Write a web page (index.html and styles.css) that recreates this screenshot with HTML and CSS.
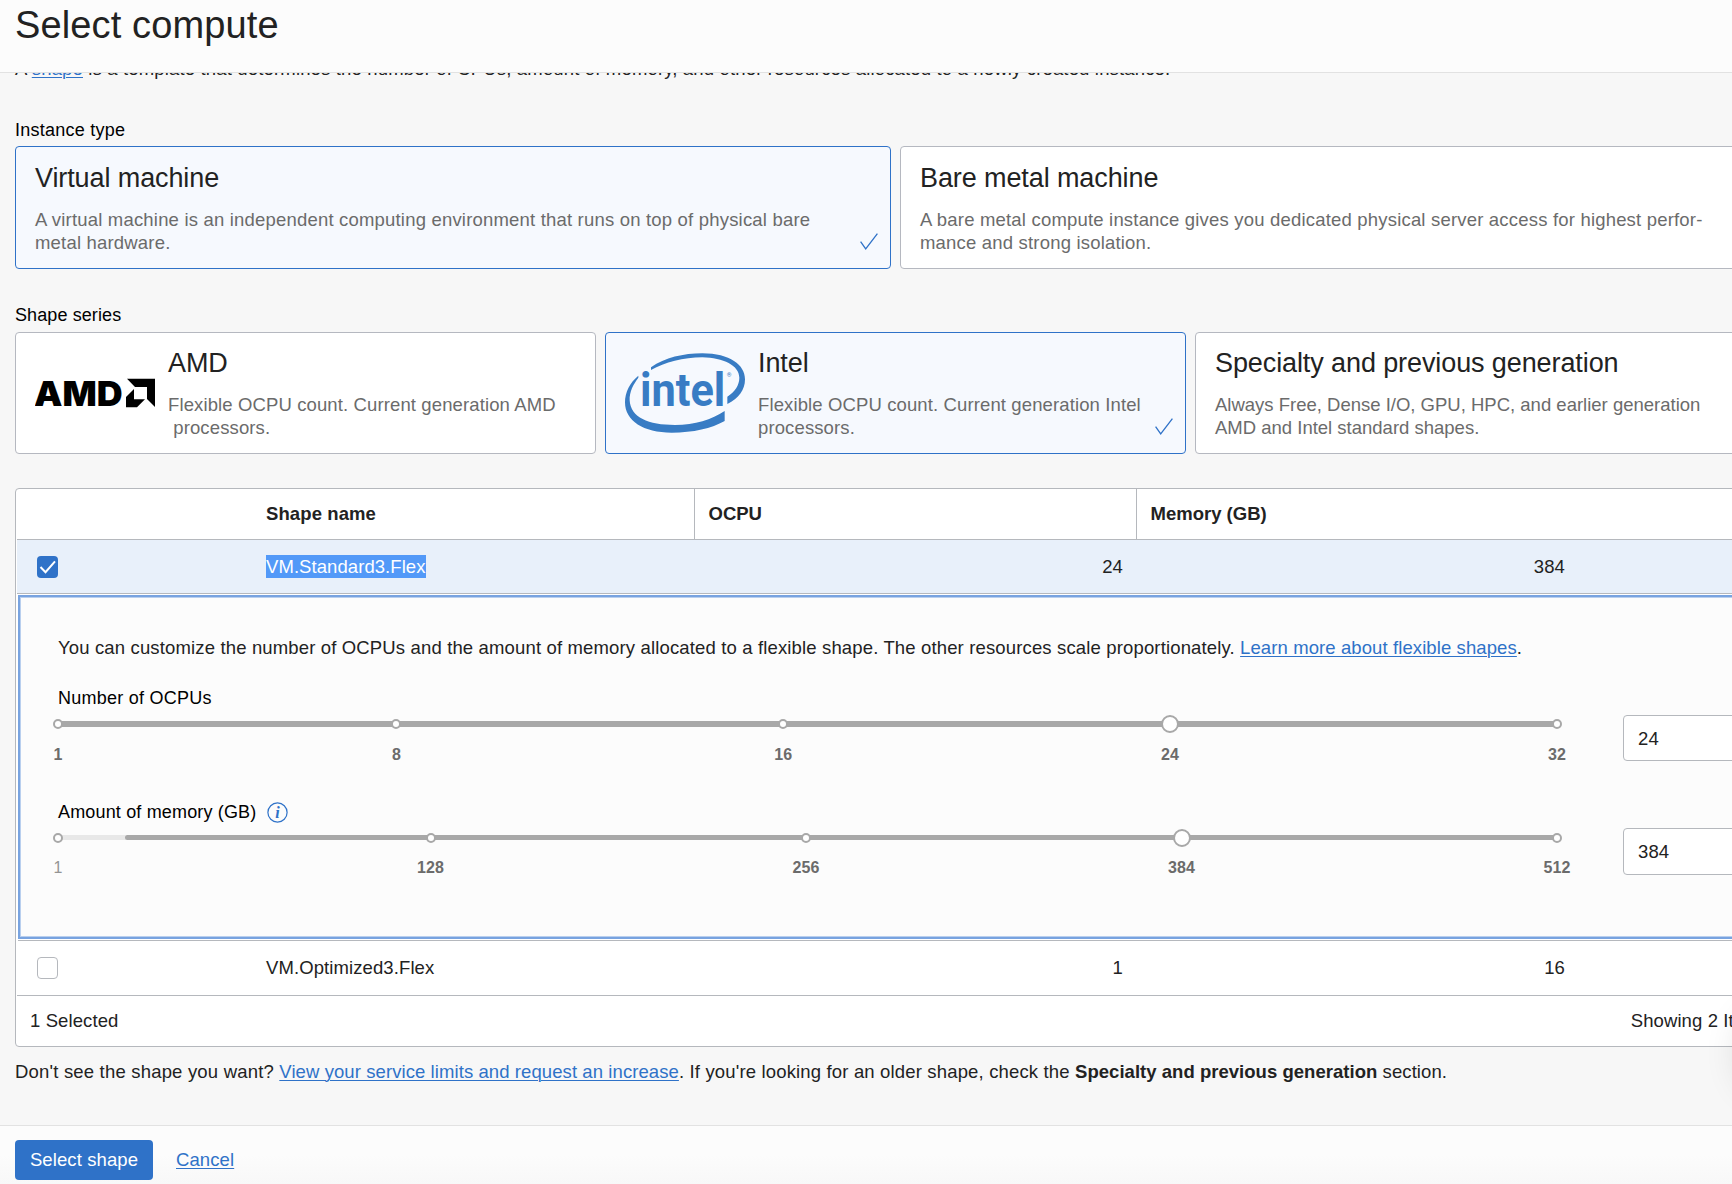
FILE: index.html
```html
<!DOCTYPE html>
<html lang="en">
<head>
<meta charset="utf-8">
<title>Select compute</title>
<link rel="stylesheet" href="styles.css">
</head>
<body>
<div class="page">
  <header class="head"><h1>Select compute</h1></header>
  <main class="body">
    <p class="intro">A <a>shape</a> is a template that determines the number of CPUs, amount of memory, and other resources allocated to a newly created instance.</p>

    <section class="group">
      <div class="label">Instance type</div>
      <div class="cards two">
        <div class="card selected">
          <div class="text">
            <h2>Virtual machine</h2>
            <p>A virtual machine is an independent computing environment that runs on top of physical bare<br>metal hardware.</p>
          </div>
          <svg class="tick" viewBox="0 0 18 17"><path d="M.6 8.6 5.7 15.8 17.4.6"/></svg>
        </div>
        <div class="card">
          <div class="text">
            <h2>Bare metal machine</h2>
            <p>A bare metal compute instance gives you dedicated physical server access for highest perfor-<br>mance and strong isolation.</p>
          </div>
        </div>
      </div>
    </section>

    <section class="group series">
      <div class="label tight">Shape series</div>
      <div class="cards three">
        <div class="card">
          <svg class="logo-amd" viewBox="30 40 360 88">
            <text x="27" y="121.500" textLength="266" lengthAdjust="spacingAndGlyphs">AMD</text>
            <path d="M306 41H390V126L366 102V66H330Z"/>
            <path d="M327 72V103H360L336 127H303V96Z"/>
          </svg>
          <div class="text">
            <h2>AMD</h2>
            <p class="snug">Flexible OCPU count. Current generation AMD<br>&nbsp;processors.</p>
          </div>
        </div>
        <div class="card selected">
          <svg class="logo-intel" viewBox="30 25 360 238">
            <path d="M108 67C150 38 205 25 262 25C345 25 390 60 390 103C390 135 371 160 337 177V155C360 140 373 120 373 98C373 62 325 38 262 37C205 37 150 52 108 75Z"/>
            <path d="M70 92C45 112 30 142 30 172C30 228 85 263 170 263C235 263 290 250 329 228V198C290 224 240 240 180 240C100 240 47 218 44 166C43 140 55 118 70 98Z"/>
            <text class="word" x="75" y="183" textLength="256" lengthAdjust="spacingAndGlyphs">intel</text>
            <text class="reg" x="335" y="95">®</text>
          </svg>
          <div class="text">
            <h2>Intel</h2>
            <p class="snug">Flexible OCPU count. Current generation Intel<br>processors.</p>
          </div>
          <svg class="tick" viewBox="0 0 18 17"><path d="M.6 8.6 5.7 15.8 17.4.6"/></svg>
        </div>
        <div class="card">
          <div class="text">
            <h2>Specialty and previous generation</h2>
            <p class="flat">Always Free, Dense I/O, GPU, HPC, and earlier generation<br>AMD and Intel standard shapes.</p>
          </div>
        </div>
      </div>
    </section>

    <section class="table">
      <div class="row header">
        <div class="cell"></div>
        <div class="cell">Shape name</div>
        <div class="cell ruled">OCPU</div>
        <div class="cell ruled">Memory (GB)</div>
      </div>
      <div class="row active">
        <div class="cell"><span class="check on"><svg viewBox="0 0 21 22"><path d="M3.500 11 8.500 16.200 18 5.300"/></svg></span></div>
        <div class="cell"><mark>VM.Standard3.Flex</mark></div>
        <div class="cell num">24</div>
        <div class="cell num">384</div>
      </div>
      <div class="panel">
        <p class="note"><span>You can customize the number of OCPUs and the amount of memory allocated to a flexible shape. The other resources scale proportionately. </span><a>Learn more about flexible shapes</a>.</p>
        <div class="field">
          <div class="control">
            <div class="label">Number of OCPUs</div>
            <div class="slider thick">
              <span class="range" style="left:0"></span>
              <i class="stop" style="left:0%"></i><i class="stop" style="left:22.58%"></i><i class="stop" style="left:48.39%"></i><i class="stop" style="left:100%"></i>
              <i class="thumb" style="left:74.19%"></i>
            </div>
            <div class="marks">
              <b style="left:0%">1</b><b style="left:22.58%">8</b><b style="left:48.39%">16</b><b style="left:74.19%">24</b><b style="left:100%">32</b>
            </div>
          </div>
          <div class="input">24</div>
        </div>
        <div class="field memory">
          <div class="control">
            <div class="label">Amount of memory (GB)
              <svg class="info" viewBox="0 0 21 21"><circle cx="10.500" cy="10.500" r="9.600"/><text x="10.500" y="15.500">i</text></svg>
            </div>
            <div class="slider">
              <span class="range" style="left:4.5%"></span>
              <i class="stop" style="left:0%"></i><i class="stop" style="left:24.85%"></i><i class="stop" style="left:49.9%"></i><i class="stop" style="left:100%"></i>
              <i class="thumb" style="left:74.95%"></i>
            </div>
            <div class="marks">
              <b class="off" style="left:0%">1</b><b style="left:24.85%">128</b><b style="left:49.9%">256</b><b style="left:74.95%">384</b><b style="left:100%">512</b>
            </div>
          </div>
          <div class="input">384</div>
        </div>
      </div>
      <div class="row last">
        <div class="cell"><span class="check"></span></div>
        <div class="cell">VM.Optimized3.Flex</div>
        <div class="cell num">1</div>
        <div class="cell num">16</div>
      </div>
      <div class="summary"><span>1 Selected</span><span>Showing 2 Items</span></div>
    </section>

    <p class="hint"><span>Don't see the shape you want? </span><a>View your service limits and request an increase</a><span>. If you're looking for an older shape, check the </span><b>Specialty and previous generation</b> section.</p>
  </main>
  <footer class="foot">
    <button class="primary">Select shape</button>
    <a>Cancel</a>
  </footer>
</div>
</body>
</html>
```

FILE: styles.css
```css
* { box-sizing: border-box; }
body {
  margin: 0;
  font: 18.5px/23px "Liberation Sans", Arial, sans-serif;
  letter-spacing: .1px;
  color: #222;
  background: #f7f7f7;
}
h1, h2, p { margin: 0; font-weight: 400; }
a { color: #2f72c8; text-decoration: underline; text-decoration-thickness: 1px; text-underline-offset: 2px; }
.page {
  position: relative;
  display: flex;
  flex-direction: column;
  width: 1732px;
  height: 1184px;
  overflow: hidden;
  white-space: nowrap;
}
/* soft shadow of the help widget docked past the right edge */
.page::after {
  content: "";
  position: absolute;
  left: 1745px;
  top: 1015px;
  width: 60px;
  height: 75px;
  border-radius: 30px;
  box-shadow: 0 0 38px 2px rgba(0, 0, 0, .16);
}
.head { flex: none; height: 73px; padding: 5px 15px 0; background: #fcfcfc; border-bottom: 1px solid #e2e2e2; }
h1 { font-size: 38px; line-height: 40px; letter-spacing: .13px; }
.body { flex: 1; min-height: 0; overflow: hidden; padding-left: 15px; }
.intro { margin-top: -16px; letter-spacing: .16px; }

.group { margin-top: 39px; }
.series { margin-top: 35px; }
.series > .label { height: 28px; }
.label { height: 27px; font-size: 18px; line-height: 23px; letter-spacing: .25px; color: #000; }
.label.tight { letter-spacing: .1px; }
.cards { display: grid; gap: 9px; width: 1761px; }
.two { grid-template-columns: repeat(2, 1fr); }
.three { grid-template-columns: repeat(3, 1fr); }
.card {
  position: relative;
  display: flex;
  gap: 13px;
  height: 123px;
  padding: 16px 19px 0;
  background: #fff;
  border: 1px solid #b5b8c0;
  border-radius: 4px;
}
.three .card { height: 122px; padding-top: 15px; }
.card.selected { background: #f6f9fe; border-color: #2f72c8; }
h2 { font-size: 27px; line-height: 30px; letter-spacing: -.1px; }
.card p { margin-top: 15px; letter-spacing: .19px; color: #6b6b6b; }
.card p.snug { letter-spacing: .12px; }
.card p.flat { letter-spacing: 0; }
.tick { position: absolute; right: 12.5px; bottom: 18px; width: 18px; height: 17px; fill: none; stroke: #2f72c8; stroke-width: 1.3; }
.logo-amd { width: 120px; height: 30px; margin-top: 30px; }
.logo-amd text { font: 900 101px Inter, sans-serif; letter-spacing: 0; }
.logo-intel { width: 120px; height: 80px; margin-top: 5px; fill: #387cc4; }
.logo-intel .word { font: 700 138px Roboto, sans-serif; letter-spacing: 0; }
.logo-intel .reg { font: 18px Roboto, sans-serif; letter-spacing: 0; }

.table { width: 1761px; height: 559px; margin-top: 34px; padding-left: 1px; background: #fff; border: 1px solid #b5b8bd; border-radius: 4px; }
.row { display: grid; grid-template-columns: 235px 442px 442px 442px; border-bottom: 1px solid #b5b8bd; }
.cell { display: flex; align-items: center; padding: 0 13px 0 14px; }
.cell:first-child { padding-left: 20px; }
.header { height: 51px; font-weight: 700; }
.header .cell { padding-bottom: 1px; }
.header .ruled { border-left: 1px solid #b5b8bd; padding-left: 13.5px; letter-spacing: 0; }
.active { height: 54px; background: #e8f0fa; }
.num { justify-content: flex-end; }
.last { height: 55px; }
.last .cell:not(:first-child) { padding-bottom: 2px; }
mark { height: 23px; background: #5299f8; color: #fff; letter-spacing: .07px; }
.check { display: block; width: 21px; height: 22px; background: #fff; border: 1px solid #b5b8bd; border-radius: 4px; }
.check.on { background: #2f72c8; border: 0; }
.check svg { display: block; fill: none; stroke: #fff; stroke-width: 2; }

.panel {
  height: 344px;
  margin: 1px 0 2px 1px;
  padding: 39px 0 0 38px;
  background: #fcfcfc;
  border: 2px solid #78a3e0;
  border-right: 0;
  box-shadow: inset 1px 1px #b9cfee, inset 0 -1px #b9cfee, 0 1px #fff, 0 2px #b5b8bd;
}
.note span { letter-spacing: .149px; }
.field { display: flex; align-items: flex-start; gap: 66px; margin-top: 29px; height: 86px; }
.field.memory { margin-top: 28px; }
.field .label { display: flex; align-items: center; gap: 11px; height: 23px; margin-top: -1px; }
.memory .label { letter-spacing: .16px; }
.control { width: 1499px; }
.slider { position: relative; height: 5px; margin-top: 11px; border-radius: 3px; background: #e8e8e8; }
.slider.thick { height: 6px; }
.range { position: absolute; top: 0; right: 0; bottom: 0; border-radius: 3px; background: #a8a8a8; }
.stop, .thumb { position: absolute; top: 50%; width: 10px; height: 10px; border: 2px solid #a8a8a8; border-radius: 50%; background: #fff; transform: translate(-50%, -50%); }
.thumb { width: 18px; height: 18px; }
.marks { position: relative; height: 20px; margin-top: 18px; }
.marks b { position: absolute; font-size: 16px; line-height: 20px; color: #6b6b6b; transform: translateX(-50%); }
.marks .off { font-weight: 400; color: #949494; }
.input { width: 130px; height: 46px; margin-top: 27px; padding: 11px 14px; background: #fff; border: 1px solid #b5b8bd; border-radius: 4px; }
.memory .input { height: 47px; margin-top: 26px; }
.info { width: 21px; height: 21px; fill: none; stroke: #2f72c8; stroke-width: 1.2; }
.info text { fill: #2f72c8; stroke: none; font: italic 700 16px "Liberation Serif", serif; text-anchor: middle; letter-spacing: 0; }

.summary { display: flex; justify-content: space-between; align-items: center; height: 49px; padding: 0 6px 1px 13px; }
.hint { margin-top: 13px; }
.hint span { letter-spacing: .16px; }
.hint span:first-child { letter-spacing: .19px; }
.hint a { letter-spacing: .085px; }
.hint b { letter-spacing: .03px; }
.foot { flex: none; display: flex; align-items: flex-start; gap: 23px; height: 59px; padding: 14px 15px 0; background: linear-gradient(#fcfcfc 50%, #f8f8f8); border-top: 1px solid #e2e2e2; }
.primary { width: 138px; height: 40px; padding: 0 0 2px; border: 0; border-radius: 4px; background: #2f72c8; color: #fff; font: inherit; letter-spacing: .1px; }
.foot a { line-height: 39px; }
```
